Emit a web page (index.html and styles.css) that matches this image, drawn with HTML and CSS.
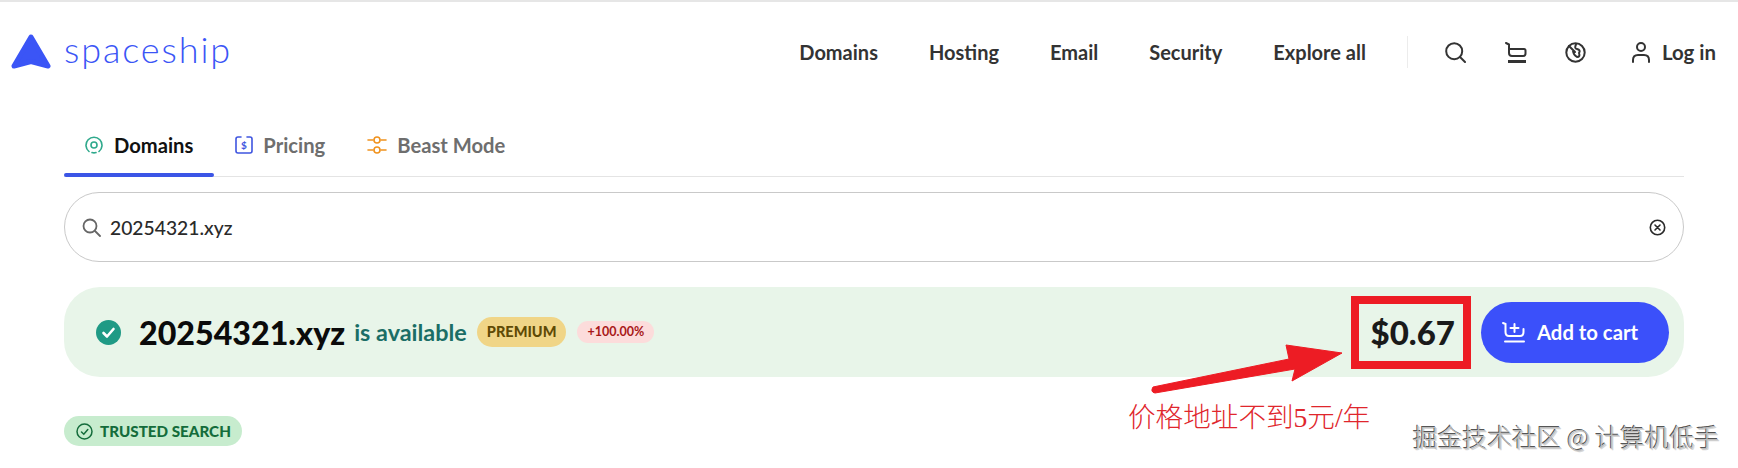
FILE: index.html
```html
<!DOCTYPE html>
<html>
  <head>
    <title>Spaceship</title>
    <meta charset="utf-8" />
    <link rel="stylesheet" href="styles.css">
  </head>
  <body>
    <div class="page">
      <header class="header">
        <a class="logo">
          <svg class="logo-mark" width="40" height="36" viewBox="0 0 40 36">
            <path d="M20 3 L37 32 L20 27.5 L3 32 Z" fill="#3b55f6" stroke="#3b55f6" stroke-width="5" stroke-linejoin="round" />
          </svg>
          <span class="logo-text">spaceship</span>
        </a>
        <nav class="nav">
          <a>Domains</a>
          <a>Hosting</a>
          <a>Email</a>
          <a>Security</a>
          <a>Explore all</a>
        </nav>
        <div class="nav-icons">
          <svg class="search-icon" width="21" height="21" viewBox="0 0 21 21">
            <circle cx="9.2" cy="9.2" r="8" />
            <path d="M15 15 L20 20" />
          </svg>
          <svg class="cart-icon" width="22" height="21" viewBox="0 0 22 21">
            <path d="M1 1 L4 2.5 V11 Q4 14 7 14 H18 Q20.5 14 20.5 11.5 V8.5 Q20.5 7 19 7 H4" />
            <path class="thick" d="M3 19.5 H21" />
          </svg>
          <svg class="globe-icon" width="21" height="21" viewBox="0 0 21 21">
            <circle cx="10.5" cy="10.5" r="9.2" />
            <path d="M4 4 L10 10 M11 2.5 Q9 6.5 12 7 Q16 8 14 11 Q15.5 15 12 15 Q8.5 13 8 9" />
          </svg>
          <a class="login">
            <svg class="user-icon" width="18" height="21" viewBox="0 0 18 21">
              <circle cx="9" cy="5" r="4" />
              <path d="M1 20 V18 Q1 13 6 13 H12 Q17 13 17 18 V20" />
            </svg>
            Log in
          </a>
        </div>
      </header>

      <main class="content">
        <div class="tabs">
          <a class="tab active">
            <svg width="18" height="18" viewBox="0 0 18 18" class="tab-icon green">
              <path d="M4 15.5 A8 8 0 1 1 14 15.5" />
              <path d="M7 16.6 A8 8 0 0 0 11 16.6" />
              <circle cx="9" cy="9" r="3" />
            </svg>
            Domains
          </a>
          <a class="tab">
            <svg width="18" height="18" viewBox="0 0 18 18" class="tab-icon blue">
              <path d="M6 1 H3 Q1 1 1 3 V15 Q1 17 3 17 H15 Q17 17 17 15 V3 Q17 1 15 1 H12" />
              <text x="9" y="12.5" class="dollar">$</text>
            </svg>
            Pricing
          </a>
          <a class="tab">
            <svg width="20" height="18" viewBox="0 0 20 18" class="tab-icon orange">
              <path d="M1 4 H6 M14 4 H19 M1 14 H6 M14 14 H19" />
              <circle cx="10" cy="4" r="3" />
              <circle cx="10" cy="14" r="3" />
            </svg>
            Beast Mode
          </a>
        </div>

        <div class="search-box">
          <svg class="field-icon" width="19" height="19" viewBox="0 0 19 19">
            <circle cx="8" cy="8" r="6.5" />
            <path d="M13 13 L18 18" />
          </svg>
          <span class="search-value">20254321.xyz</span>
          <svg class="clear-icon" width="17" height="17" viewBox="0 0 17 17">
            <circle cx="8.5" cy="8.5" r="7.2" />
            <path d="M6 6 L11 11 M11 6 L6 11" />
          </svg>
        </div>

        <div class="result">
          <svg class="result-check" width="25" height="25" viewBox="0 0 25 25">
            <circle cx="12.5" cy="12.5" r="12.5" fill="#1f9a85" />
            <path d="M7.5 13 L11 16.5 L17.5 9" fill="none" stroke="#fff" stroke-width="2.6" stroke-linecap="round" stroke-linejoin="round" />
          </svg>
          <span class="result-domain">20254321.xyz</span>
          <span class="result-status">is available</span>
          <span class="badge-premium">PREMIUM</span>
          <span class="badge-percent">+100.00%</span>
          <span class="result-price">$0.67</span>
          <button class="cart-btn">
            <svg width="24" height="22" viewBox="0 0 24 22">
              <path d="M1 2 L3.5 3 V11 Q3.5 15 7 15 H18 Q21.5 15 21.5 11 V8" />
              <path d="M12.5 3 V11 M8.5 7 H16.5" />
              <path d="M3 20.5 H22" />
            </svg>
            Add to cart
          </button>
        </div>

        <div class="trusted">
          <svg width="17" height="17" viewBox="0 0 17 17">
            <circle cx="8.5" cy="8.5" r="7.5" />
            <path d="M5.5 9 L7.8 11.2 L11.8 6.5" />
          </svg>
          TRUSTED SEARCH
        </div>
      </main>

      <!-- annotations drawn over the screenshot -->
      <div class="mark-box"></div>
      <svg class="mark-arrow" width="200" height="60" viewBox="0 0 200 60">
        <path d="M3 48 L139 20 L136 6 L192 14 L142 42 L145 30 L5 54 Q0 53 3 48 Z" fill="#ed1c24" stroke="#ed1c24" stroke-width="1" stroke-linejoin="round" />
      </svg>
      <div class="mark-note">价格地址不到5元/年</div>
      <div class="watermark">掘金技术社区 @ 计算机低手</div>
    </div>
  </body>
</html>
```

FILE: styles.css
```css
body {
  margin: 0;
  padding: 0;
  background: #ffffff;
  color: #333333;
  font-family: Lato, "Noto Sans", sans-serif;
  overflow: hidden;
}
svg {
  display: block;
  flex: none;
}
.page {
  position: relative;
  width: 1738px;
  height: 468px;
  border-top: 2px solid #e6e6e6;
  box-sizing: border-box;
}

/* Header */
.header {
  display: flex;
  align-items: center;
  height: 100px;
  padding-left: 11px;
}
.logo {
  display: flex;
  align-items: center;
  color: #3b55f6;
}
.logo-text {
  margin-left: 13px;
  margin-bottom: 7px;
  font-family: Lato, sans-serif;
  font-size: 36px;
  font-weight: 300;
  letter-spacing: 1.9px;
  line-height: 40px;
}
.nav {
  display: flex;
  gap: 51px;
  margin-left: auto;
  padding-right: 41px;
  height: 32px;
  align-items: center;
  border-right: 1px solid #ececec;
  font-size: 20px;
  font-weight: 700;
}
.nav-icons {
  display: flex;
  align-items: center;
  margin-left: 37px;
  margin-right: 22px;
}
.nav-icons svg {
  fill: none;
  stroke: #333333;
  stroke-width: 2;
  stroke-linecap: round;
  stroke-linejoin: round;
}
.cart-icon {
  margin-left: 39px;
}
.cart-icon .thick {
  stroke-width: 3;
  stroke-linecap: butt;
}
.globe-icon {
  margin-left: 38px;
}
.login {
  display: flex;
  align-items: center;
  gap: 12px;
  margin-left: 46px;
  font-size: 20.4px;
  font-weight: 700;
}

/* Tabs */
.content {
  margin: 0 54px 0 64px;
}
.tabs {
  display: flex;
  height: 75px;
  box-sizing: border-box;
  border-bottom: 1px solid #e4e4e4;
}
.tab {
  display: flex;
  align-items: center;
  gap: 10px;
  padding: 11px 21px 0 21px;
  font-size: 20.2px;
  font-weight: 700;
  color: #6e6e6e;
}
.tab.active {
  gap: 11px;
  color: #111111;
  position: relative;
}
.tab.active::after {
  content: "";
  position: absolute;
  left: 0;
  right: 0;
  bottom: -1px;
  height: 4px;
  border-radius: 2px;
  background: #3b55e6;
}
.tab-icon {
  fill: none;
  stroke-width: 1.6;
  stroke-linecap: round;
}
.tab-icon.green {
  stroke: #2fa98c;
}
.tab-icon.blue {
  stroke: #3f55e0;
}
.tab-icon.orange {
  stroke: #f0921e;
}
.dollar {
  fill: #3f55e0;
  stroke: none;
  font-size: 10px;
  font-weight: 700;
  text-anchor: middle;
}

/* Search */
.search-box {
  display: flex;
  align-items: center;
  height: 70px;
  box-sizing: border-box;
  margin-top: 15px;
  padding: 0 17px;
  border: 1px solid #c9c9c9;
  border-radius: 35px;
}
.field-icon {
  fill: none;
  stroke: #666666;
  stroke-width: 1.8;
  stroke-linecap: round;
}
.search-value {
  margin-left: 9px;
  font-size: 19.3px;
  font-weight: 500;
  color: #2a2a2a;
}
.clear-icon {
  margin-left: auto;
  fill: none;
  stroke: #2a2a2a;
  stroke-width: 1.6;
  stroke-linecap: round;
}

/* Result */
.result {
  display: flex;
  align-items: center;
  height: 90px;
  box-sizing: border-box;
  margin-top: 25px;
  padding: 0 15px 0 32px;
  background: #e8f5e9;
  border-radius: 36px;
}
.result-domain {
  margin-left: 18px;
  font-size: 32.2px;
  font-weight: 900;
  color: #0b0b0b;
}
.result-status {
  margin-left: 9px;
  font-size: 23.4px;
  font-weight: 700;
  color: #1b6e66;
}
.badge-premium {
  margin-left: 10px;
  padding: 0 10px;
  height: 30px;
  line-height: 30px;
  border-radius: 15px;
  background: #f0d587;
  color: #5f4a05;
  font-size: 14.5px;
  font-weight: 900;
}
.badge-percent {
  margin-left: 11px;
  padding: 0 10px;
  height: 22px;
  line-height: 22px;
  border-radius: 11px;
  background: #fcdcdb;
  color: #a81818;
  font-size: 12.5px;
  font-weight: 700;
}
.result-price {
  margin-left: auto;
  font-size: 33px;
  font-weight: 900;
  color: #1a1a1a;
}
.cart-btn {
  display: flex;
  align-items: center;
  gap: 11px;
  margin-left: 26px;
  width: 188px;
  height: 61px;
  padding: 0 0 0 21px;
  border: none;
  border-radius: 31px;
  background: #3b50fa;
  color: #ffffff;
  font-family: inherit;
  font-size: 20.3px;
  font-weight: 700;
}
.cart-btn svg {
  fill: none;
  stroke: #ffffff;
  stroke-width: 2;
  stroke-linecap: round;
}
.trusted {
  display: inline-flex;
  align-items: center;
  gap: 7px;
  height: 30px;
  margin-top: 39px;
  padding: 0 11px 0 12px;
  border-radius: 15px;
  background: #c7ecce;
  color: #146c3b;
  font-size: 15.2px;
  font-weight: 900;
}
.trusted svg {
  fill: none;
  stroke: #146c3b;
  stroke-width: 1.5;
  stroke-linecap: round;
}

/* Annotations */
.mark-box {
  position: absolute;
  left: 1351px;
  top: 294px;
  width: 120px;
  height: 73px;
  box-sizing: border-box;
  border: 8px solid #ed1c24;
}
.mark-arrow {
  position: absolute;
  left: 1150px;
  top: 337px;
}
.mark-note {
  position: absolute;
  left: 1128px;
  top: 398px;
  font-family: "Liberation Serif", "Noto Sans CJK SC", serif;
  font-size: 27.6px;
  font-weight: 300;
  line-height: 36px;
  color: #e0262c;
}
.watermark {
  position: absolute;
  left: 1413px;
  top: 416px;
  font-family: "Noto Sans CJK SC", sans-serif;
  font-size: 24.8px;
  font-weight: 300;
  line-height: 36px;
  white-space: nowrap;
  color: #bdbdbd;
  text-shadow: -1px -1px 0 #555555, 1px 1px 0 #d6d6d6;
}
```
